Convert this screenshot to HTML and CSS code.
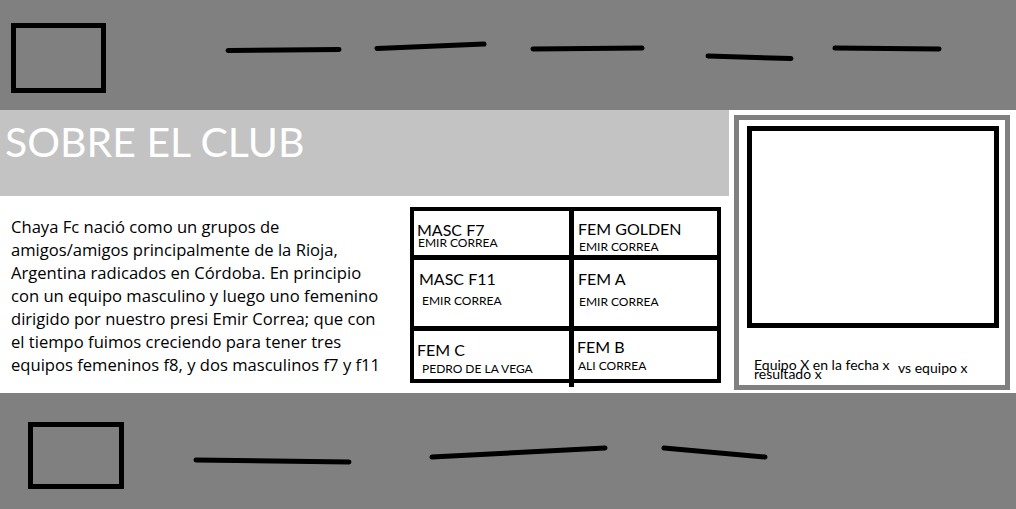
FILE: index.html
```html
<!DOCTYPE html>
<html lang="es">
<head>
    <meta charset="UTF-8">
    <meta name="viewport" content="width=device-width, initial-scale=1.0">
    <title>Chaya Fc - Sobre el club</title>
    <link rel="stylesheet" href="styles.css">
</head>
<body>
    <header class="topbar">
        <div class="logo"></div>
        <nav class="menu">
            <a href="#" class="menu-link link-1"><svg width="117" height="14"><path d="M3 7.5 L114 6.5"/></svg></a>
            <a href="#" class="menu-link link-2"><svg width="113" height="14"><path d="M3 8.5 L110 4"/></svg></a>
            <a href="#" class="menu-link link-3"><svg width="115" height="14"><path d="M3 7 L112 6"/></svg></a>
            <a href="#" class="menu-link link-4"><svg width="89" height="14"><path d="M3 6 L86 8.5"/></svg></a>
            <a href="#" class="menu-link link-5"><svg width="110" height="14"><path d="M3 6 L107 7"/></svg></a>
        </nav>
    </header>

    <main class="main">
        <section class="club">
            <div class="hero">
                <h1>SOBRE EL CLUB</h1>
            </div>
            <div class="club-body">
                <p class="about">
                    Chaya Fc nació como un grupos de<br>
                    amigos/amigos principalmente de la Rioja,<br>
                    Argentina radicados en Córdoba. En principio<br>
                    con un equipo masculino y luego uno femenino<br>
                    dirigido por nuestro presi Emir Correa; que con<br>
                    el tiempo fuimos creciendo para tener tres<br>
                    equipos femeninos f8, y dos masculinos f7 y f11
                </p>
                <div class="teams">
                    <div class="team team-f7">
                        <h3>MASC F7</h3>
                        <p>EMIR CORREA</p>
                    </div>
                    <div class="team team-golden">
                        <h3>FEM GOLDEN</h3>
                        <p>EMIR CORREA</p>
                    </div>
                    <div class="team team-f11">
                        <h3>MASC F11</h3>
                        <p>EMIR CORREA</p>
                    </div>
                    <div class="team team-a">
                        <h3>FEM A</h3>
                        <p>EMIR CORREA</p>
                    </div>
                    <div class="team team-c">
                        <h3>FEM C</h3>
                        <p>PEDRO DE LA VEGA</p>
                    </div>
                    <div class="team team-b">
                        <h3>FEM B</h3>
                        <p>ALI CORREA</p>
                    </div>
                </div>
            </div>
        </section>

        <aside class="match">
            <div class="match-card">
                <div class="match-photo"></div>
                <div class="match-info">
                    <div class="match-text">
                        <span>Equipo X en la fecha x</span>
                        <span>resultado x</span>
                    </div>
                    <span class="match-vs">vs equipo x</span>
                </div>
            </div>
        </aside>
    </main>

    <footer class="bottombar">
        <div class="logo logo-footer"></div>
        <nav class="menu">
            <a href="#" class="menu-link foot-1"><svg width="159" height="14"><path d="M3 7 L156 9"/></svg></a>
            <a href="#" class="menu-link foot-2"><svg width="179" height="18"><path d="M3 14 L176 5"/></svg></a>
            <a href="#" class="menu-link foot-3"><svg width="107" height="18"><path d="M3 5 L104 14"/></svg></a>
        </nav>
    </footer>
</body>
</html>
```

FILE: styles.css
```css
body {
    font-family: Lato, "Liberation Sans", sans-serif;
    margin: 0;
    padding: 0;
    width: 1016px;
    height: 509px;
    overflow: hidden;
    color: #000;
}

/* header / footer */

.topbar,
.bottombar {
    background-color: #808080;
    display: flex;
    align-items: flex-start;
}

.topbar {
    height: 110px;
    padding-left: 11px;
    box-sizing: border-box;
}

.bottombar {
    height: 116px;
    padding-left: 28px;
    box-sizing: border-box;
}

.logo {
    width: 95px;
    height: 70px;
    margin-top: 23px;
    border: 5px solid #000;
    box-sizing: border-box;
}

.logo-footer {
    width: 96px;
    height: 67px;
    margin-top: 29px;
}

.menu {
    display: flex;
    align-items: flex-start;
}

.menu-link {
    display: block;
    line-height: 0;
}

.menu-link path {
    stroke: #000;
    stroke-width: 5;
    stroke-linecap: round;
    fill: none;
}

.link-1 { margin: 43px 0 0 119px; }
.link-2 { margin: 40px 0 0 32px; }
.link-3 { margin: 42px 0 0 43px; }
.link-4 { margin: 50px 0 0 60px; }
.link-5 { margin: 42px 0 0 38px; }

.foot-1 { margin: 60px 0 0 69px; }
.foot-2 { margin: 50px 0 0 77px; }
.foot-3 { margin: 50px 0 0 53px; }

/* main */

.main {
    display: grid;
    grid-template-columns: 729px 1fr;
    height: 283px;
    background-color: #fff;
}

.hero {
    background-color: #c3c3c3;
    height: 86px;
    padding: 11px 0 0 5px;
    box-sizing: border-box;
}

.hero h1 {
    margin: 0;
    font-size: 41px;
    font-weight: 400;
    line-height: 1;
    color: #fff;
}

.club-body {
    display: flex;
    align-items: flex-start;
}

.about {
    width: 410px;
    margin: 19px 0 0;
    padding-left: 11px;
    box-sizing: border-box;
    font-family: "Open Sans", Lato, sans-serif;
    font-size: 16.6px;
    line-height: 23px;
}

.teams {
    position: relative;
    margin-top: 11px;
    display: grid;
    grid-template-columns: 155px 143px;
    grid-template-rows: 44px 66px 48px;
    gap: 5px;
    background-color: #000;
    border: 4px solid #000;
}

/* the middle line runs a bit past the box */
.teams::after {
    content: "";
    position: absolute;
    left: 155px;
    bottom: -8px;
    width: 5px;
    height: 8px;
    background-color: #000;
}

.team {
    background-color: #fff;
    padding: 11px 0 0 4px;
}

.team h3 {
    margin: 0;
    font-size: 16px;
    font-weight: 400;
    line-height: 16px;
}

.team p {
    margin: 0;
    font-size: 12px;
    line-height: 12px;
}

.team-f7 { padding: 11px 0 0 3px; }
.team-f7 p { margin: -1px 0 0 1px; }

.team-golden { padding: 10px 0 0 4px; }
.team-golden p { margin: 4px 0 0 1px; }

.team-f11 { padding: 11px 0 0 5px; }
.team-f11 p { margin: 8px 0 0 3px; }

.team-a { padding: 11px 0 0 4px; }
.team-a p { margin: 8.5px 0 0 1px; }

.team-c { padding: 11px 0 0 3px; }
.team-c p { margin: 5px 0 0 5px; }

.team-b { padding: 8px 0 0 3px; }
.team-b p { margin: 5px 0 0 1px; }

/* ultimo partido */

.match {
    padding: 5px 6px 3px 5px;
}

.match-card {
    height: 100%;
    border: 5px solid #808080;
    box-sizing: border-box;
}

.match-photo {
    width: 252px;
    height: 202px;
    margin: 6px 0 0 8px;
    border: 5px solid #000;
    box-sizing: border-box;
}

.match-info {
    display: flex;
    margin: 32px 0 0 15px;
    font-size: 14px;
    line-height: 9px;
}

.match-text {
    display: flex;
    flex-direction: column;
    width: 144px;
}

.match-vs {
    margin-top: 3px;
}
```
